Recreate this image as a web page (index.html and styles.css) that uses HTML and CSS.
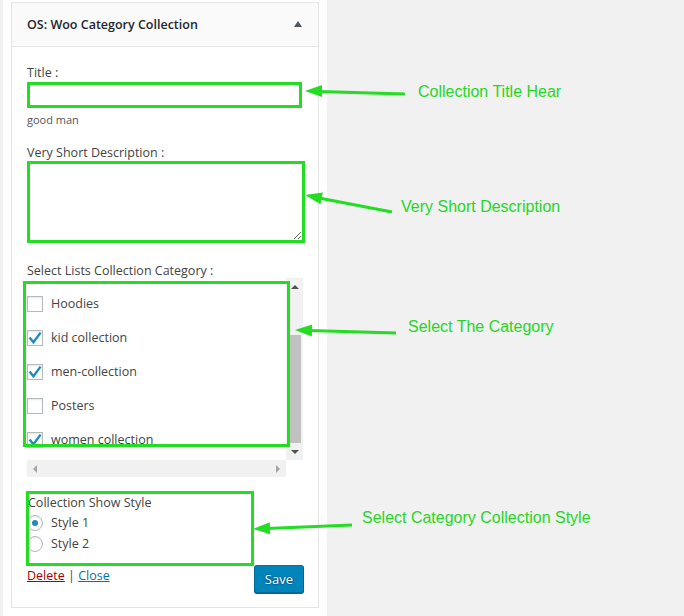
FILE: index.html
```html
<!DOCTYPE html>
<html lang="en">
<head>
<meta charset="utf-8">
<title>OS: Woo Category Collection</title>
<link rel="stylesheet" href="styles.css">
</head>
<body>
<div class="sidebar">
  <div class="widget">
    <div class="widget-top">
      <h3 class="widget-title">OS: Woo Category Collection</h3>
      <span class="toggle"></span>
    </div>
    <div class="widget-inside">
      <label class="field-label title-label">Title :</label>
      <input class="text-input" type="text">
      <p class="hint">good man</p>
      <label class="field-label desc-label">Very Short Description :</label>
      <textarea class="desc-input"></textarea>
      <label class="field-label cat-label">Select Lists Collection Category :</label>
      <div class="cat-list">
        <div class="cat-viewport">
          <ul class="cat-items">
            <li><span class="checkbox"></span>Hoodies</li>
            <li><span class="checkbox"><svg viewBox="0 0 16 16" class="tick"><path d="M2.6 7.6 L6.4 12.2 L13.6 2.6"/></svg></span>kid collection</li>
            <li><span class="checkbox"><svg viewBox="0 0 16 16" class="tick"><path d="M2.6 7.6 L6.4 12.2 L13.6 2.6"/></svg></span>men-collection</li>
            <li><span class="checkbox"></span>Posters</li>
            <li><span class="checkbox"><svg viewBox="0 0 16 16" class="tick"><path d="M2.6 7.6 L6.4 12.2 L13.6 2.6"/></svg></span>women collection</li>
          </ul>
        </div>
        <div class="vscroll">
          <span class="sb-btn"><span class="arr arr-up"></span></span>
          <span class="thumb"></span>
          <span class="sb-btn sb-bottom"><span class="arr arr-down"></span></span>
        </div>
        <div class="hscroll">
          <span class="arr arr-left"></span>
          <span class="arr arr-right"></span>
        </div>
        <div class="corner"></div>
        <div class="mark mark-list"></div>
      </div>
      <div class="style-group">
        <div class="style-title">Collection Show Style</div>
        <label class="radio-row"><span class="radio checked"></span>Style 1</label>
        <label class="radio-row"><span class="radio"></span>Style 2</label>
        <div class="mark mark-style"></div>
      </div>
      <div class="widget-control">
        <div class="links"><a class="link-delete" href="#">Delete</a> | <a class="link-close" href="#">Close</a></div>
        <button class="save" type="button">Save</button>
      </div>
    </div>
  </div>
</div>

<div class="annotations">
  <svg class="arrows" width="684" height="616" viewBox="0 0 684 616">
    <g class="arrow">
      <line x1="319" y1="91.5" x2="405" y2="94"/>
      <polygon points="305,91 322,85 322,97"/>
    </g>
    <g class="arrow">
      <line x1="319" y1="198" x2="392" y2="212"/>
      <polygon points="305,195 322.9,192.4 320.5,204.2"/>
    </g>
    <g class="arrow">
      <line x1="309" y1="330.4" x2="396" y2="333"/>
      <polygon points="295,330 312.2,324.5 311.8,336.5"/>
    </g>
    <g class="arrow">
      <line x1="267" y1="528.4" x2="352" y2="525"/>
      <polygon points="253,529 269.8,522.3 270.2,534.3"/>
    </g>
  </svg>
  <span class="note note-title">Collection Title Hear</span>
  <span class="note note-desc">Very Short Description</span>
  <span class="note note-cat">Select The Category</span>
  <span class="note note-style">Select Category Collection Style</span>
</div>
</body>
</html>
```

FILE: styles.css
```css
html, body {
  margin: 0;
  padding: 0;
}
body {
  background: #f1f1f1;
  font-family: "Open Sans", "DejaVu Sans", sans-serif;
  font-size: 12.5px;
  color: #444;
  width: 684px;
  height: 616px;
  overflow: hidden;
  position: relative;
}

.sidebar {
  width: 324px;
  height: 616px;
  margin-left: 3px;
  background: #fff;
  padding: 2px 8px 0;
  box-sizing: border-box;
}

.widget {
  border: 1px solid #e5e5e5;
  background: #fff;
}

.widget-top {
  height: 43px;
  background: #fafafa;
  border-bottom: 1px solid #e5e5e5;
  display: flex;
  align-items: center;
  justify-content: space-between;
  padding: 0 16px 0 15px;
}
.widget-title {
  margin: 0;
  font-size: 12.5px;
  font-weight: 600;
  color: #23282d;
  line-height: 18px;
}
.toggle {
  width: 0;
  height: 0;
  border-left: 4px solid transparent;
  border-right: 4px solid transparent;
  border-bottom: 6px solid #50575e;
  margin-top: -1px;
}

.widget-inside {
  padding: 0 15px 14px;
}

.field-label {
  display: block;
  line-height: 16px;
  color: #444;
}
.title-label { margin-top: 18px; }
.desc-label { margin-top: 18px; }
.cat-label { margin-top: 20px; margin-bottom: -1px; }

.text-input {
  display: block;
  width: 275px;
  height: 26px;
  margin: 1px 0 0;
  padding: 0 6px;
  box-sizing: border-box;
  border: 3px solid #22dd22;
  background: #fff;
  outline: none;
}
.hint {
  margin: 5px 0 0;
  font-size: 11px;
  line-height: 14px;
  color: #555;
}
.desc-input {
  display: block;
  width: 278px;
  height: 82px;
  margin: 0;
  padding: 2px 6px;
  box-sizing: border-box;
  border: 3px solid #22dd22;
  background: #fff;
  outline: none;
  font-family: inherit;
}

/* category list with scrollbars */
.cat-list {
  position: relative;
  display: grid;
  grid-template-columns: 259px 17px;
  grid-template-rows: 182px 17px;
}
.cat-viewport {
  background: #fff;
  overflow: hidden;
}
.cat-items {
  list-style: none;
  margin: 0;
  padding: 9px 0 0;
}
.cat-items li {
  height: 34px;
  display: flex;
  align-items: center;
  gap: 8px;
  line-height: 18px;
  color: #444;
  white-space: nowrap;
}
.checkbox {
  width: 16px;
  height: 16px;
  box-sizing: border-box;
  border: 1px solid #b4b9be;
  background: #fff;
  box-shadow: inset 0 1px 2px rgba(0,0,0,0.1);
  flex: none;
  position: relative;
}
.tick {
  position: absolute;
  left: -1px;
  top: -1px;
  width: 16px;
  height: 16px;
  overflow: visible;
}
.tick path {
  fill: none;
  stroke: #1e8cbe;
  stroke-width: 2.4;
  stroke-linecap: butt;
  stroke-linejoin: miter;
}

.vscroll {
  background: #f1f1f1;
  display: flex;
  flex-direction: column;
}
.sb-btn {
  height: 17px;
  flex: none;
  display: flex;
  align-items: center;
  justify-content: center;
}
.sb-bottom { margin-top: auto; }
.thumb {
  height: 108px;
  margin: 40px 2px 0;
  background: #c1c1c1;
  flex: none;
}
.arr {
  width: 0;
  height: 0;
}
.arr-up {
  border-left: 4px solid transparent;
  border-right: 4px solid transparent;
  border-bottom: 4px solid #505050;
}
.arr-down {
  border-left: 4px solid transparent;
  border-right: 4px solid transparent;
  border-top: 4px solid #505050;
}
.hscroll {
  background: #f1f1f1;
  display: flex;
  align-items: center;
  justify-content: space-between;
  padding: 0 6px;
}
.arr-left {
  border-top: 4px solid transparent;
  border-bottom: 4px solid transparent;
  border-right: 4px solid #a3a3a3;
}
.arr-right {
  border-top: 4px solid transparent;
  border-bottom: 4px solid transparent;
  border-left: 4px solid #a3a3a3;
}
.corner { background: #fff; }

/* annotation boxes */
.mark {
  position: absolute;
  border: 3px solid #22dd22;
  box-sizing: border-box;
  pointer-events: none;
}
.mark-list {
  left: -4px;
  top: 3px;
  width: 267px;
  height: 166px;
}
.mark-style {
  left: -1px;
  top: 0;
  width: 228px;
  height: 75px;
}

.style-group {
  position: relative;
  margin-top: 14px;
  padding: 3px 0 12px;
}
.style-title {
  line-height: 18px;
  padding-left: 1px;
  color: #444;
}
.radio-row {
  height: 21px;
  display: flex;
  align-items: center;
  gap: 8px;
  color: #444;
}
.radio {
  width: 16px;
  height: 16px;
  box-sizing: border-box;
  border: 1px solid #b4b9be;
  border-radius: 50%;
  background: #fff;
  box-shadow: inset 0 1px 2px rgba(0,0,0,0.1);
  display: flex;
  align-items: center;
  justify-content: center;
  flex: none;
}
.radio.checked::before {
  content: "";
  width: 6px;
  height: 6px;
  border-radius: 50%;
  background: #1e8cbe;
}

.widget-control {
  display: flex;
  justify-content: space-between;
  align-items: flex-start;
  margin-top: -1px;
}
.links {
  margin-top: 2px;
  line-height: 18px;
  color: #444;
}
.link-delete { color: #a00; text-decoration: underline; }
.link-close { color: #0073aa; text-decoration: underline; }
.save {
  height: 28px;
  padding: 0 10px;
  margin-right: -1px;
  border: 1px solid #0073aa;
  border-color: #0073aa #006799 #006799;
  border-radius: 3px;
  background: #0085ba;
  box-shadow: 0 1px 0 #006799;
  color: #fff;
  text-shadow: 0 -1px 1px #006799, 1px 0 1px #006799, 0 1px 1px #006799, -1px 0 1px #006799;
  font-family: inherit;
  font-size: 13px;
  line-height: 26px;
  cursor: pointer;
}

/* annotation layer */
.annotations {
  position: absolute;
  left: 0;
  top: 0;
  width: 684px;
  height: 616px;
  pointer-events: none;
}
.arrows {
  position: absolute;
  left: 0;
  top: 0;
}
.arrow line {
  stroke: #22dd22;
  stroke-width: 3;
}
.arrow polygon {
  fill: #22dd22;
}
.note {
  position: absolute;
  font-family: "Liberation Sans", Arial, sans-serif;
  font-size: 16px;
  line-height: 18px;
  color: #26d626;
  white-space: nowrap;
}
.note-title { left: 418px; top: 83px; }
.note-desc { left: 401px; top: 198px; }
.note-cat { left: 408px; top: 318px; }
.note-style { left: 362px; top: 509px; }
```
